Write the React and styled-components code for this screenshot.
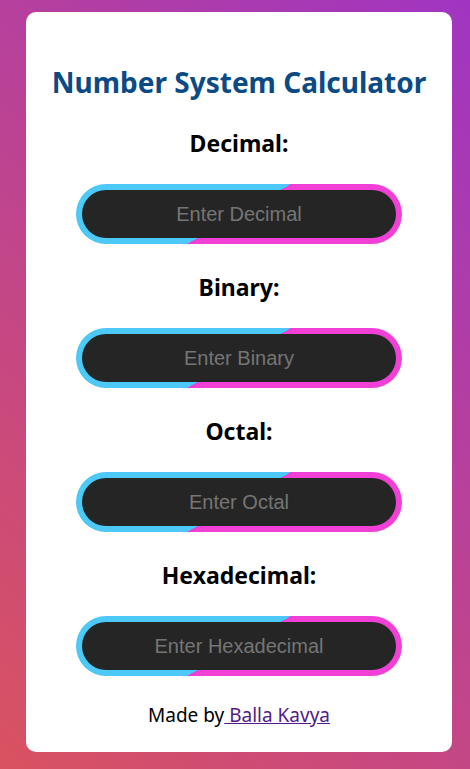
import React from "react";
import styled, { createGlobalStyle } from "styled-components";

const GlobalStyle = createGlobalStyle`
  html, body {
    margin: 0;
    padding: 0;
  }
  body {
    min-height: 100vh;
    background: linear-gradient(45deg, #da5260, #a035c2);
    font-family: "Noto Sans", "Open Sans", sans-serif;
  }
`;

const Page = styled.div`
  padding: 12px 18px 18px 26px;
  box-sizing: border-box;
  min-height: 769px;
`;

const Card = styled.main`
  width: 426px;
  box-sizing: border-box;
  background: #ffffff;
  border-radius: 10px;
  padding: 53px 0 23px;
  display: flex;
  flex-direction: column;
  align-items: center;
`;

const Title = styled.h1`
  margin: 0 0 29px;
  font-size: 28px;
  line-height: 34px;
  font-weight: 700;
  color: #0a4a85;
  text-align: center;
`;

const Group = styled.section`
  display: flex;
  flex-direction: column;
  align-items: center;
  margin-bottom: 28px;
`;

const Label = styled.label`
  display: block;
  margin: 0 0 26px;
  font-size: 23px;
  line-height: 30px;
  font-weight: 700;
  color: #000;
`;

const Ring = styled.div`
  width: 326px;
  height: 60px;
  box-sizing: border-box;
  padding: 6px;
  border-radius: 30px;
  background: linear-gradient(150deg, #4cc9f7 50%, #f23fd6 50%);
`;

const Field = styled.input`
  display: block;
  width: 100%;
  height: 48px;
  box-sizing: border-box;
  border: none;
  outline: none;
  border-radius: 24px;
  background: #252525;
  color: #ffffff;
  text-align: center;
  font-family: "Liberation Sans", Arial, sans-serif;
  font-size: 20px;
  &::placeholder {
    color: #757575;
  }
`;

const Footer = styled.p`
  margin: -3px 0 0;
  font-size: 19px;
  line-height: 28px;
  color: #000;
`;

const Link = styled.a`
  color: #551a8b;
  text-decoration: underline;
`;

const fields = [
  { label: "Decimal:", placeholder: "Enter Decimal" },
  { label: "Binary:", placeholder: "Enter Binary" },
  { label: "Octal:", placeholder: "Enter Octal" },
  { label: "Hexadecimal:", placeholder: "Enter Hexadecimal" },
];

export default function App() {
  return (
    <>
      <GlobalStyle />
      <Page>
        <Card>
          <Title>Number System Calculator</Title>
          {fields.map((f) => (
            <Group key={f.label}>
              <Label>{f.label}</Label>
              <Ring>
                <Field type="text" placeholder={f.placeholder} />
              </Ring>
            </Group>
          ))}
          <Footer>
            Made by<Link href="#"> Balla Kavya</Link>
          </Footer>
        </Card>
      </Page>
    </>
  );
}
